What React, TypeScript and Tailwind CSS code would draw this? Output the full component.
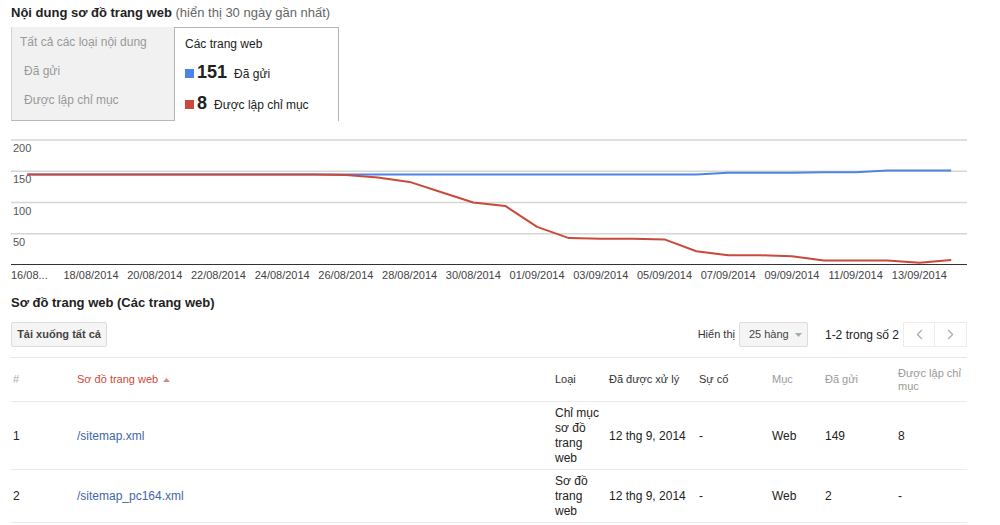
import { ChevronLeft, ChevronRight } from "lucide-react"

const submitted = [
  145, 145, 145, 145, 145, 145, 145, 145, 145, 145, 145, 145, 145, 145, 145, 145, 145, 145, 145, 145, 145, 145,
  147.7, 147.7, 147.7, 148.3, 148.3, 151, 151, 151,
]
const indexed = [
  145, 145, 145, 145, 145, 145, 145, 145, 145, 145, 144, 140, 133, 116.5, 100, 94.5, 61, 43, 42, 42, 41, 22, 15.5,
  15.5, 14, 7, 7, 7, 3.7, 8,
]
const dates = [
  "18/08/2014", "20/08/2014", "22/08/2014", "24/08/2014", "26/08/2014", "28/08/2014", "30/08/2014",
  "01/09/2014", "03/09/2014", "05/09/2014", "07/09/2014", "09/09/2014", "11/09/2014", "13/09/2014",
]

const px = (i: number) => 16.3 + i * 31.86
const py = (v: number) => 135 - v * 0.625
const toPath = (vals: number[]) => vals.map((v, i) => `${i ? "L" : "M"}${px(i).toFixed(1)},${py(v).toFixed(1)}`).join(" ")

function Chart() {
  return (
    <svg width="956" height="155" className="block" style={{ fontFamily: "'Liberation Sans', Arial, sans-serif" }}>
      {[200, 150, 100, 50].map((v) => (
        <g key={v}>
          <line x1="0" x2="956" y1={py(v)} y2={py(v)} stroke="#d6d6d6" strokeWidth="1.5" />
          <text x="2" y={py(v) + 12} fontSize="11" fill="#555">
            {v}
          </text>
        </g>
      ))}
      <line x1="0" x2="956" y1="134.5" y2="134.5" stroke="#333" strokeWidth="1" />
      <path d={toPath(submitted)} fill="none" stroke="#4d84e6" strokeWidth="2" strokeLinejoin="round" />
      <path d={toPath(indexed)} fill="none" stroke="#c94a3c" strokeWidth="2" strokeLinejoin="round" />
      <text x="0" y="149" fontSize="11" fill="#444">
        16/08...
      </text>
      {dates.map((d, k) => (
        <text key={d} x={px((k + 1) * 2)} y="149" fontSize="11" fill="#444" textAnchor="middle">
          {d}
        </text>
      ))}
    </svg>
  )
}

const cols = ["w-[64px]", "w-[478px]", "w-[54px]", "w-[90px]", "w-[73px]", "w-[53px]", "w-[73px]", "w-[71px]"]

const rows = [
  { n: "1", file: "/sitemap.xml", type: "Chỉ mục sơ đồ trang web", date: "12 thg 9, 2014", issue: "-", kind: "Web", sent: "149", idx: "8" },
  { n: "2", file: "/sitemap_pc164.xml", type: "Sơ đồ trang web", date: "12 thg 9, 2014", issue: "-", kind: "Web", sent: "2", idx: "-" },
]

export default function App() {
  return (
    <div className="w-[1000px] h-[525px] overflow-hidden bg-white pl-[11px] font-['Liberation_Sans',Arial,sans-serif]">
      <div className="w-[956px]">
        <div className="mt-[5px] h-[16px] leading-[16px] text-[13px] text-[#222]">
          <span className="font-bold">Nội dung sơ đồ trang web</span>{" "}
          <span className="text-[#666]">(hiển thị 30 ngày gần nhất)</span>
        </div>

        <div className="mt-[6px] flex h-[94px]">
          <div className="w-[163px] bg-[#f1f1f1] border-l border-b border-l-[#d4d4d4] border-b-[#b9b9b9] pt-[8px] text-[12px] text-[#999] leading-[15px]">
            <div className="pl-[8px]">Tất cả các loại nội dung</div>
            <div className="pl-[12px] mt-[14px]">Đã gửi</div>
            <div className="pl-[12px] mt-[14px]">Được lập chỉ mục</div>
          </div>
          <div className="w-[165px] border-l border-t border-r border-[#b5b5b5] pt-[9px] pl-[10px] text-[12px] text-[#222]">
            <div className="leading-[15px]">Các trang web</div>
            <div className="mt-[10px] flex items-baseline h-[20px] leading-[20px]">
              <span className="inline-block w-[9px] h-[9px] bg-[#4d84e6] mr-[3px]" />
              <span className="text-[18px] font-bold">151</span>
              <span className="ml-[7px]">Đã gửi</span>
            </div>
            <div className="mt-[11px] flex items-baseline h-[20px] leading-[20px]">
              <span className="inline-block w-[9px] h-[9px] bg-[#c94a3c] mr-[3px]" />
              <span className="text-[18px] font-bold">8</span>
              <span className="ml-[7px]">Được lập chỉ mục</span>
            </div>
          </div>
        </div>

        <div className="mt-[9px]">
          <Chart />
        </div>

        <div className="mt-[10px] h-[16px] leading-[16px] text-[13px] font-bold text-[#222]">Sơ đồ trang web (Các trang web)</div>

        <div className="mt-[11px] flex h-[25px] items-center justify-between">
          <button className="h-[25px] w-[96px] rounded-[2px] border border-[#dcdcdc] bg-[#f5f5f5] text-[11px] font-bold text-[#444]">
            Tải xuống tất cả
          </button>
          <div className="flex h-[25px] items-center">
            <span className="text-[11px] text-[#333] mr-[4px]">Hiển thị</span>
            <div className="flex h-[25px] w-[69px] items-center rounded-[2px] border border-[#dcdcdc] bg-[#f5f5f5] pl-[9px] text-[11px] text-[#444]">
              25 hàng
              <svg width="7" height="4" className="ml-[6px]">
                <path d="M0 0 L7 0 L3.5 4 Z" fill="#aaa" />
              </svg>
            </div>
            <span className="ml-[17px] text-[12px] text-[#222]">1-2 trong số 2</span>
            <div className="ml-[4px] flex h-[25px]">
              <div className="flex w-[32px] items-center justify-center border border-[#ececec]">
                <ChevronLeft size={17} strokeWidth={1.6} color="#aaa" />
              </div>
              <div className="flex w-[32px] items-center justify-center border border-l-0 border-[#ececec]">
                <ChevronRight size={17} strokeWidth={1.6} color="#aaa" />
              </div>
            </div>
          </div>
        </div>

        <table className="mt-[10px] w-[956px] table-fixed border-collapse border-t border-[#e5e5e5] text-left">
          <colgroup>
            {cols.map((c, i) => (
              <col key={i} className={c} />
            ))}
          </colgroup>
          <thead>
            <tr className="h-[44px] border-b border-[#ebebeb] text-[11px] leading-[13px]">
              <th className="pl-[2px] font-normal text-[#aaa]">#</th>
              <th className="pl-[2px] font-normal text-[#d14836]">
                <span className="inline-flex items-center">
                  Sơ đồ trang web
                  <svg width="7" height="4" className="ml-[5px]">
                    <path d="M0 4 L7 4 L3.5 0 Z" fill="#d98a80" />
                  </svg>
                </span>
              </th>
              <th className="pl-[2px] font-normal text-[#333]">Loại</th>
              <th className="pl-[2px] font-normal text-[#333]">Đã được xử lý</th>
              <th className="pl-[2px] font-normal text-[#333]">Sự cố</th>
              <th className="pl-[2px] font-normal text-[#999]">Mục</th>
              <th className="pl-[2px] font-normal text-[#999]">Đã gửi</th>
              <th className="pl-[2px] font-normal text-[#999]">Được lập chỉ mục</th>
            </tr>
          </thead>
          <tbody className="text-[12px] leading-[15px] text-[#222]">
            {rows.map((r) => (
              <tr key={r.n} className="border-b border-[#ebebeb]">
                <td className="pl-[2px] pt-[4px] pb-[3px]">{r.n}</td>
                <td className="pl-[2px] pt-[4px] pb-[3px] text-[#4466a8]">{r.file}</td>
                <td className="pl-[2px] pr-[6px] pt-[4px] pb-[3px]">{r.type}</td>
                <td className="pl-[2px] pt-[4px] pb-[3px]">{r.date}</td>
                <td className="pl-[2px] pt-[4px] pb-[3px]">{r.issue}</td>
                <td className="pl-[2px] pt-[4px] pb-[3px]">{r.kind}</td>
                <td className="pl-[2px] pt-[4px] pb-[3px]">{r.sent}</td>
                <td className="pl-[2px] pt-[4px] pb-[3px]">{r.idx}</td>
              </tr>
            ))}
          </tbody>
        </table>
      </div>
    </div>
  )
}
